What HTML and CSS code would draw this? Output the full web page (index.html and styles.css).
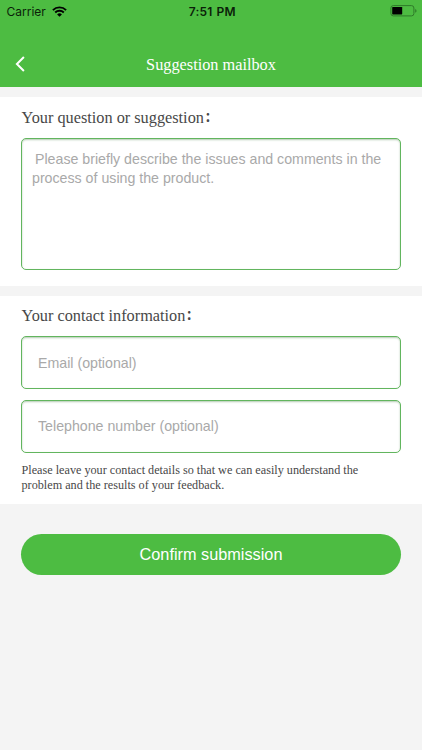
FILE: index.html
```
<!DOCTYPE html>
<html lang="en">
<head>
  <meta charset="UTF-8">
  <meta name="viewport" content="width=device-width, initial-scale=1.0">
  <title>Suggestion mailbox</title>
  <link rel="stylesheet" href="styles.css">
</head>
<body>

  <header class="header">
    <div class="status-bar">
      <div class="carrier">
        <span>Carrier</span>
        <svg class="wifi" width="15" height="11" viewBox="0 0 15 11">
          <path d="M0.9 4.1a9.4 9.4 0 0 1 13.2 0M3.2 6.5a6.1 6.1 0 0 1 8.6 0" fill="none" stroke="#000" stroke-width="1.9"/>
          <path d="M7.5 10.8L5.1 8.4a3.4 3.4 0 0 1 4.8 0z" fill="#000"/>
        </svg>
      </div>
      <span class="time">7:51 PM</span>
      <svg class="battery" width="28" height="12" viewBox="0 0 28 12">
        <rect x="0.9" y="0.6" width="23" height="10.3" rx="2.4" fill="none" stroke="#2f7a29" stroke-width="1"/>
        <rect x="2.2" y="2" width="10" height="7.4" rx="0.6" fill="#000"/>
        <path d="M25.2 4v3.8c1.8-.7 1.8-3.1 0-3.8z" fill="#2f7a29"/>
      </svg>
    </div>
    <div class="nav-bar">
      <a href="#" class="back" aria-label="Back">
        <svg width="10" height="16" viewBox="0 0 10 16">
          <path d="M8.9 1L1.9 8l7 7" fill="none" stroke="#fff" stroke-width="2"/>
        </svg>
      </a>
      <h1>Suggestion mailbox</h1>
    </div>
  </header>

  <form>
    <!-- QUESTION -->
    <div class="section question">
      <label for="question">Your question or suggestion<span class="colon">:</span></label>
      <textarea id="question" placeholder="Please briefly describe the issues and comments in the process of using the product."></textarea>
    </div>

    <!-- CONTACT -->
    <div class="section contact">
      <label for="email">Your contact information<span class="colon">:</span></label>
      <input type="text" id="email" placeholder="Email (optional)">
      <input type="text" id="phone" placeholder="Telephone number (optional)">
      <p class="hint">Please leave your contact details so that we can easily understand the problem and the results of your feedback.</p>
    </div>

    <button type="submit">Confirm submission</button>
  </form>

</body>
</html>
```

FILE: styles.css
```
* {
  box-sizing: border-box;
}
body {
  margin: 0;
  height: 750px;
  background: #f4f4f4;
  font-family: "Liberation Serif", "Noto Sans CJK SC", serif;
  color: #484848;
  overflow: hidden;
}
.header {
  height: 87px;
  background: #4dbc42;
}
.status-bar {
  display: grid;
  grid-template-columns: 1fr auto 1fr;
  align-items: center;
  height: 22px;
  padding: 0 4px 0 6.5px;
  font-family: Inter, sans-serif;
  font-size: 12px;
  color: #0b1f09;
}
.carrier {
  display: flex;
  align-items: center;
  gap: 6px;
}
.time {
  font-weight: 600;
  letter-spacing: 0.15px;
  word-spacing: 1px;
}
.battery {
  justify-self: end;
}
.nav-bar {
  display: grid;
  grid-template-columns: 40px 1fr 40px;
  align-items: center;
  height: 42px;
  margin-top: 21px;
}
.back {
  display: flex;
  padding-left: 15px;
}
h1 {
  margin: 2px 0 0;
  font-size: 16.3px;
  font-weight: normal;
  text-align: center;
  color: #fff;
}
.section {
  background: #fff;
  padding: 0 21px;
}
.question {
  height: 188.5px;
  margin-top: 10px;
}
.contact {
  height: 208px;
  margin-top: 10px;
}
label {
  display: block;
  height: 41px;
  padding-left: 0.5px;
  line-height: 41px;
  font-size: 16.3px;
}
.contact label {
  height: 40.5px;
  line-height: 40px;
}
.colon {
  margin-left: 1.5px;
  font-family: "Noto Sans CJK SC", sans-serif;
  font-weight: 500;
  line-height: 1;
  vertical-align: 1px;
}
textarea,
input {
  display: block;
  width: 380px;
  border: 1px solid #62b55e;
  border-radius: 5px;
  background: #fff;
  box-shadow: inset 0 1px 2px #b4cbb2;
  font-family: "Liberation Sans", sans-serif;
  font-size: 14.2px;
  outline: none;
}
textarea {
  height: 132px;
  padding: 11px 10px;
  line-height: 18.5px;
  text-indent: 3px;
  resize: none;
}
input {
  height: 53px;
  margin-bottom: 10.5px;
  padding: 0 16px;
}
textarea::placeholder,
input::placeholder {
  color: #a9a9a9;
}
.hint {
  margin: 0;
  padding-left: 0.5px;
  font-size: 12.2px;
  line-height: 15.3px;
}
button {
  display: block;
  width: 380px;
  height: 41px;
  margin: 30px auto 0;
  border: none;
  border-radius: 21px;
  background: #4dbc42;
  font-family: "Liberation Sans", sans-serif;
  font-size: 16.3px;
  color: #fff;
}
```
